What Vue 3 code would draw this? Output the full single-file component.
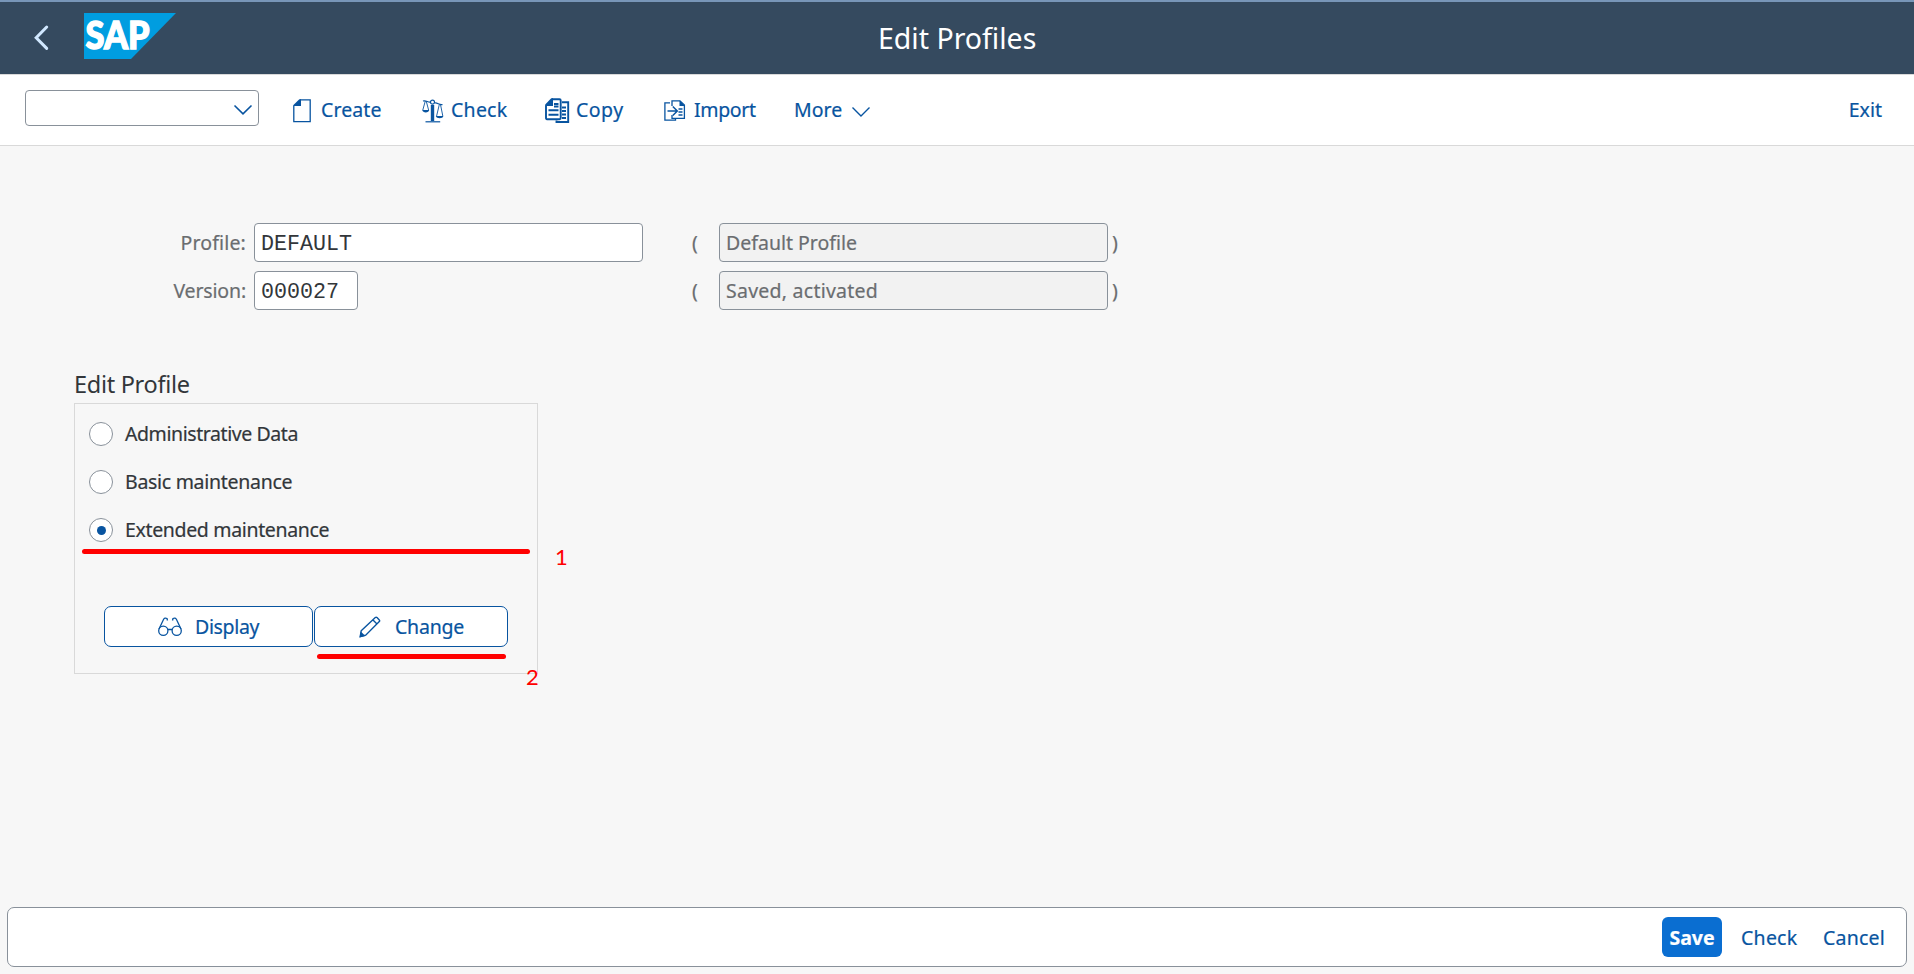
<script setup>
const rows = [
  { label: 'Profile:', value: 'DEFAULT', wide: true, text: 'Default Profile', cls: 't-default', lcls: 't-profile' },
  { label: 'Version:', value: '000027', wide: false, text: 'Saved, activated', cls: 't-saved', lcls: 't-version' },
]
const options = [
  { label: 'Administrative Data', checked: false, cls: 't-admin' },
  { label: 'Basic maintenance', checked: false, cls: 't-basic' },
  { label: 'Extended maintenance', checked: true, cls: 't-ext' },
]
</script>

<template>
  <div class="page">
    <header class="shell">
      <svg class="back" width="16" height="26" viewBox="0 0 16 26"><path d="M12.700 2 2.200 12.700 12.700 23.400" /></svg>
      <svg class="logo" width="92" height="46" viewBox="0 0 92 46">
        <path d="M0 0H92L47 46H0z" fill="#009de0" />
        <text x="1.500" y="35.600" textLength="64" lengthAdjust="spacingAndGlyphs">SAP</text>
      </svg>
      <h1><span class="t-title">Edit Profiles</span></h1>
    </header>

    <nav class="toolbar">
      <div class="combo">
        <svg width="20" height="12" viewBox="0 0 20 12"><path d="M1.500 1.500 10 9.800 18.500 1.500" /></svg>
      </div>
      <button class="tool create">
        <svg width="18" height="24" viewBox="0 0 18 24">
          <path d="M7 .9H17.200V22.700H.8V7" fill="none" stroke="currentColor" stroke-width="1.300" />
          <path d="M6.300.3H8V7H.2V6.200z" fill="currentColor" />
        </svg>
        <span class="t-create">Create</span>
      </button>
      <button class="tool check">
        <svg width="22" height="24" viewBox="0 0 22 24" fill="none" stroke="currentColor" stroke-width="1.200">
          <path d="M1 2C4 1 6 3.500 8.500 3M13 4C15.500 3.500 17.500 6.500 20.500 5.500" />
          <path d="M3.200 2.400.8 11M4.300 2.400 6.600 11M17.200 6 14.600 17M18.600 6 20.800 17" stroke-width=".9" />
          <path d="M.2 11H7.200C7 14.300.7 14.300.2 11zM13.800 17H21.400C21 20 14.400 20 13.800 17z" fill="currentColor" stroke="none" />
          <circle cx="10.500" cy="3.200" r="2" />
          <path d="M10.500 6V22" stroke-width="3.400" />
          <path d="M3.500 22.800H18.200" />
        </svg>
        <span class="t-check">Check</span>
      </button>
      <button class="tool copy">
        <svg width="25" height="26" viewBox="0 0 25 26" fill="none" stroke="currentColor">
          <path d="M7 1.200H14.500Q15.700 1.200 15.700 2.500V20Q15.700 21.200 14.500 21.200H2Q1 21.200 1 20V7.500" stroke-width="1.900" />
          <path d="M6.200.3H8V8H.2V6.500z" fill="currentColor" stroke="none" />
          <path d="M9 6H13.500M9 8.500H13.500M3.500 12.200H13.500M3.500 16.800H13.500" stroke-width="2" />
          <path d="M17 4.200H23.200V24H11.500V22.500" stroke-width="1.900" />
          <path d="M17 9.500H21M17 13H21M17 16.500H21M17 20H21" stroke-width="2" />
        </svg>
        <span class="t-copy">Copy</span>
      </button>
      <button class="tool import">
        <svg width="22" height="22" viewBox="0 0 22 22" fill="none" stroke="currentColor" stroke-width="1.300">
          <path d="M6 2.800H.9V20.200H11.500V19" />
          <path d="M8 6V.9H16L20.400 5V18.300H8V15" />
          <path d="M15.500.5 20.900 6H15.500z" fill="currentColor" stroke="none" />
          <path d="M3.500 11H13M8.800 6.500 13.300 11 8.800 15.500" stroke-width="1.500" />
          <path d="M14.500 9H18.500M14.500 12H18.500M14.500 15H18.500" stroke-width="1.400" />
        </svg>
        <span class="t-import">Import</span>
      </button>
      <button class="tool more">
        <span class="t-more">More</span>
        <svg width="20" height="12" viewBox="0 0 20 12"><path d="M1.500 1.500 10 10 18.500 1.500" fill="none" stroke="currentColor" stroke-width="1.400" /></svg>
      </button>
      <button class="tool exit"><span class="t-exit">Exit</span></button>
    </nav>

    <main class="content">
      <section class="form">
        <div v-for="r in rows" :key="r.label" class="row">
          <label class="label"><span :class="r.lcls">{{ r.label }}</span></label>
          <div class="slot"><div class="field mono" :class="{ short: !r.wide }">{{ r.value }}</div></div>
          <span class="paren">(</span>
          <div class="field readonly"><span :class="r.cls">{{ r.text }}</span></div>
          <span class="paren close">)</span>
        </div>
      </section>

      <h2><span class="t-group">Edit Profile</span></h2>
      <section class="group">
        <div v-for="o in options" :key="o.label" class="option">
          <i class="radio" :class="{ on: o.checked }"></i>
          <span :class="o.cls">{{ o.label }}</span>
        </div>
        <div class="actions">
          <button class="btn display">
            <svg width="24" height="20" viewBox="0 0 24 20" fill="none" stroke="currentColor" stroke-width="1.300">
              <circle cx="5.300" cy="13.700" r="4.600" /><circle cx="18.700" cy="13.700" r="4.600" />
              <path d="M10 12.500H14M1 12 5.500 2.500Q6.800.2 9 1.500L9.500 3.500M23 12 18.500 2.500Q17.200.2 15 1.500L14.500 3.500" />
            </svg>
            <span class="t-display">Display</span>
          </button>
          <button class="btn change">
            <svg width="22" height="22" viewBox="0 0 22 22" fill="none" stroke="currentColor" stroke-width="1.400">
              <path d="M2.200 14.800 16.300 1.600Q17.200.8 18 1.600L20.300 3.900Q21.100 4.700 20.300 5.500L6.700 19.200 1.200 20.600zM14 4 18 8" />
              <path d="M1.700 15.500 6.500 20 .6 21.400z" fill="currentColor" stroke="none" />
            </svg>
            <span class="t-change">Change</span>
          </button>
        </div>
        <i class="mark first"></i>
        <i class="mark second"></i>
        <b class="num one">1</b>
        <b class="num two">2</b>
      </section>
    </main>

    <footer class="footer">
      <button class="save"><span class="t-save">Save</span></button>
      <button class="link fcheck"><span class="t-check">Check</span></button>
      <button class="link cancel"><span class="t-cancel">Cancel</span></button>
    </footer>
  </div>
</template>

<style>
body { margin: 0; background: #f7f7f7; }
</style>

<style scoped>
* { box-sizing: border-box; }
.page { width: 1914px; height: 974px; display: flex; flex-direction: column; overflow: hidden; background: #f7f7f7; color: #32363a; font: 19.500px/24px "Noto Sans", sans-serif; }
button { appearance: none; background: none; border: 0; padding: 0; margin: 0; font: inherit; color: #0854a0; }
span { white-space: nowrap; -webkit-text-stroke: .2px currentColor; }
svg { flex: none; display: block; overflow: visible; }
.shell { height: 75px; flex: none; background: #354a5f; border-top: 2px solid #7896b8; border-bottom: 1px solid #d9d9d9; display: grid; grid-template-columns: 34px 50px 794px 1fr; align-items: start; }
.back { grid-column: 2; margin-top: 23px; fill: none; stroke: #d1e8ff; stroke-width: 3; stroke-linecap: round; }
.logo { margin-top: 11px; }
.logo text { font: 900 38px Lato, sans-serif; fill: #fff; stroke: #fff; stroke-width: 1.400; }
h1 { margin: 17px 0 0; font-size: 28.500px; line-height: 38px; font-weight: 400; color: #fff; }
.t-title { -webkit-text-stroke: 0; }
.t-create { letter-spacing: .1px; }
.t-check { letter-spacing: .25px; }
.t-copy { letter-spacing: .5px; }
.t-import { letter-spacing: -.35px; }
.t-profile { letter-spacing: .15px; }
.t-version { letter-spacing: -.15px; }
.t-saved { letter-spacing: .25px; }
.t-group { letter-spacing: -.3px; -webkit-text-stroke: 0; }
.t-admin { letter-spacing: -.42px; }
.t-basic { letter-spacing: -.29px; }
.t-ext { letter-spacing: -.34px; }
.t-display { letter-spacing: -.35px; }
.t-change { letter-spacing: -.2px; }
.t-cancel { letter-spacing: .2px; }

.toolbar { height: 71px; flex: none; background: #fff; border-bottom: 1px solid #d9d9d9; display: flex; padding-left: 25px; }
.combo { width: 234px; height: 36px; margin: 15px 34px 0 0; border: 1px solid #89919a; border-radius: 4px; display: flex; justify-content: flex-end; align-items: center; padding: 3px 5px 0 0; }
.combo svg { fill: none; stroke: #0854a0; stroke-width: 1.600; }
.tool { height: 71px; display: flex; align-items: center; flex: none; }
.tool span { position: relative; top: -1px; }
.create { width: 129px; gap: 10px; }
.check { width: 123px; gap: 7px; }
.copy { width: 119px; gap: 6px; }
.import { width: 130px; gap: 8px; }
.more { gap: 9px; }
.more svg { margin-top: 3px; }
.exit { margin: 0 32px 0 auto; }

.content { flex: 1; }
.form { padding: 77px 0 0 0; display: flex; flex-direction: column; gap: 9px; }
.row { display: flex; align-items: center; height: 39px; color: #6a6d70; }
.label { width: 254px; display: flex; justify-content: flex-end; padding-right: 8px; }
.slot { width: 438px; }
.field { width: 389px; height: 39px; border: 1px solid #89919a; border-radius: 4px; background: #fff; color: #32363a; padding: 0 7px; line-height: 37px; }
.short { width: 104px; }
.mono { font-family: "Liberation Mono", monospace; font-size: 21.660px; padding-left: 6px; line-height: 41px; }
.readonly { background: #f2f2f2; color: #6a6d70; padding-left: 6px; }
.paren { width: 27px; }
.close { padding-left: 4px; }
h2 { margin: 62px 0 0 74px; height: 31px; font-size: 23.500px; line-height: 25px; font-weight: 400; }
.group { position: relative; margin-left: 74px; width: 464px; height: 271px; border: 1px solid #d9d9d9; padding: 6px 0 0 14px; }
.option { height: 48px; display: flex; align-items: center; gap: 12px; }
.radio { width: 24px; height: 24px; border: 1px solid #89919a; border-radius: 50%; background: #fff; display: grid; place-items: center; }
.on::after { content: ""; width: 9px; height: 9px; border-radius: 50%; background: #0854a0; }
.actions { display: flex; gap: 1px; padding: 52px 0 0 15px; }
.btn { height: 41px; border: 1px solid #0854a0; border-radius: 7px; background: #fff; display: flex; align-items: center; }
.display { width: 209px; padding-left: 53px; gap: 13px; }
.change { width: 194px; padding-left: 44px; gap: 14px; }
.mark { position: absolute; height: 5px; border-radius: 3px; background: #f00; }
.first { left: 7px; top: 145px; width: 448px; }
.second { left: 242px; top: 250px; width: 189px; }
.num { position: absolute; color: #f00; font: 400 22px/24px Lato, sans-serif; }
.one { left: 480px; top: 141px; }
.two { left: 451px; top: 261px; }

.footer { margin: 0 7px 7px; height: 60px; flex: none; border: 1px solid #89919a; border-radius: 7px; background: #fff; display: flex; align-items: center; justify-content: flex-end; padding-right: 21px; }
.footer span { position: relative; top: 1px; }
.save { width: 60px; height: 40px; background: #0a6ed1; border-radius: 6px; color: #fff; font-weight: 700; margin-right: 19px; }
.fcheck { width: 82px; text-align: left; }
.cancel { width: 62px; text-align: left; }
</style>
